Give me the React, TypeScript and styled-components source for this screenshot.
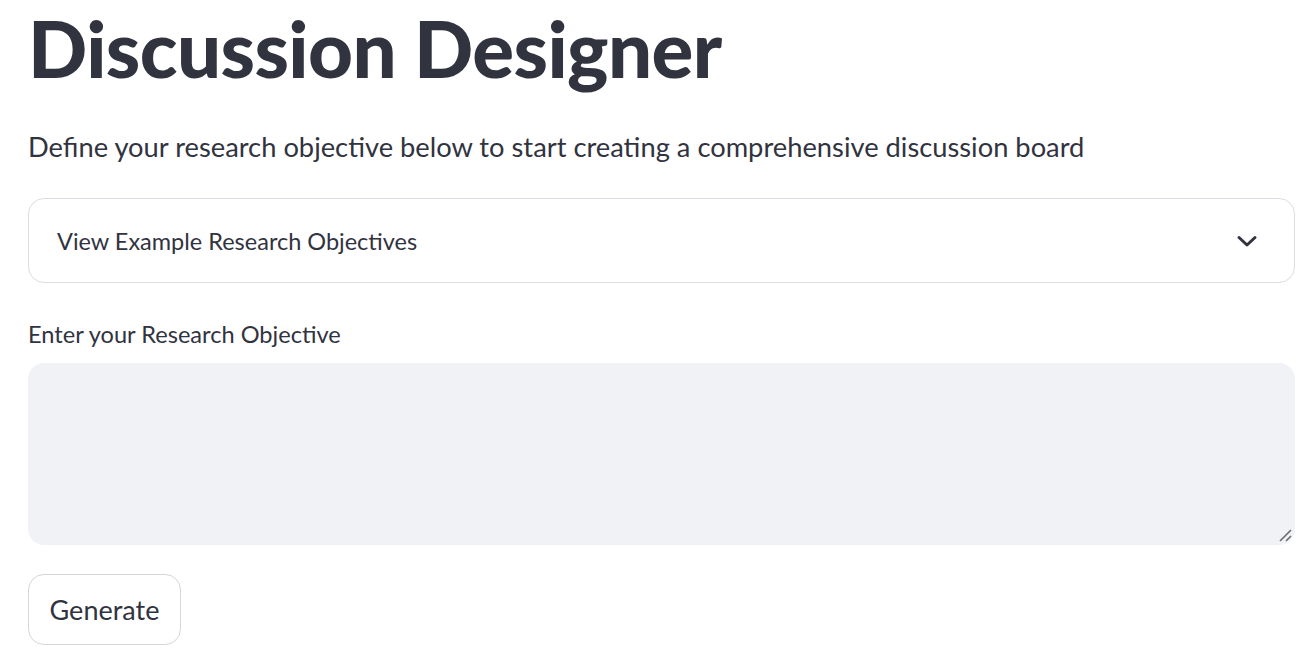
import React, { useState } from 'react';
import styled, { createGlobalStyle } from 'styled-components';

const GlobalStyle = createGlobalStyle`
  html, body {
    margin: 0;
    padding: 0;
    background: #ffffff;
  }
  body {
    font-family: Lato, "Noto Sans", sans-serif;
    color: #31333f;
  }
`

const Page = styled.div`
  display: flex;
  flex-direction: column;
  padding: 0 21px 0 28px;
`

const Title = styled.h1`
  margin: 0;
  font-family: Lato, "Noto Sans", sans-serif;
  font-weight: 900;
  font-size: 78px;
  line-height: 96px;
  letter-spacing: -0.6px;
  color: #31333f;
`

const Intro = styled.p`
  margin: 31px 0 0;
  font-size: 27.3px;
  line-height: 40px;
  color: #31333f;
`

const Expander = styled.div`
  margin-top: 31px;
  height: 85px;
  box-sizing: border-box;
  border: 1.5px solid #dcdde2;
  border-radius: 16px;
  display: flex;
  align-items: center;
  justify-content: space-between;
  padding: 0 36px 0 28px;
  cursor: pointer;
`

const ExpanderLabel = styled.span`
  font-size: 23.5px;
  color: #31333f;
`

const FieldLabel = styled.label`
  margin-top: 35px;
  font-size: 23.6px;
  line-height: 32px;
  color: #31333f;
`

const AreaWrap = styled.div`
  position: relative;
  margin-top: 13px;
  height: 182px;
`

const Area = styled.textarea`
  width: 100%;
  height: 100%;
  box-sizing: border-box;
  border: none;
  outline: none;
  resize: none;
  border-radius: 16px;
  background: #f0f2f6;
  padding: 16px 20px;
  font-family: inherit;
  font-size: 24px;
  color: #31333f;
`

const Grip = styled.svg`
  position: absolute;
  right: 3px;
  bottom: 3px;
  width: 14px;
  height: 14px;
  pointer-events: none;
`

const Button = styled.button`
  margin-top: 29px;
  align-self: flex-start;
  width: 153px;
  height: 71px;
  box-sizing: border-box;
  background: #ffffff;
  border: 1.5px solid #d6d6da;
  border-radius: 16px;
  font-family: inherit;
  font-size: 27px;
  color: #31333f;
  cursor: pointer;
`

const Chevron = () => (
  <svg width="22" height="14" viewBox="0 0 22 14" fill="none">
    <path d="M3 3.5 L11 11 L19 3.5" stroke="#31333f" strokeWidth="3" strokeLinecap="round" strokeLinejoin="round" />
  </svg>
)

const App = () => {
  const [objective, setObjective] = useState('');

  return (
    <Page>
      <GlobalStyle />
      <Title>Discussion Designer</Title>
      <Intro>Define your research objective below to start creating a comprehensive discussion board</Intro>

      <Expander>
        <ExpanderLabel>View Example Research Objectives</ExpanderLabel>
        <Chevron />
      </Expander>

      <FieldLabel>Enter your Research Objective</FieldLabel>
      <AreaWrap>
        <Area value={objective} onChange={(e) => setObjective(e.target.value)} />
        <Grip viewBox="0 0 14 14">
          <path d="M2 13 L13 2 M8 13 L13 8" stroke="#6b6b70" strokeWidth="1.6" />
        </Grip>
      </AreaWrap>

      <Button>Generate</Button>
    </Page>
  )
}

export default App
